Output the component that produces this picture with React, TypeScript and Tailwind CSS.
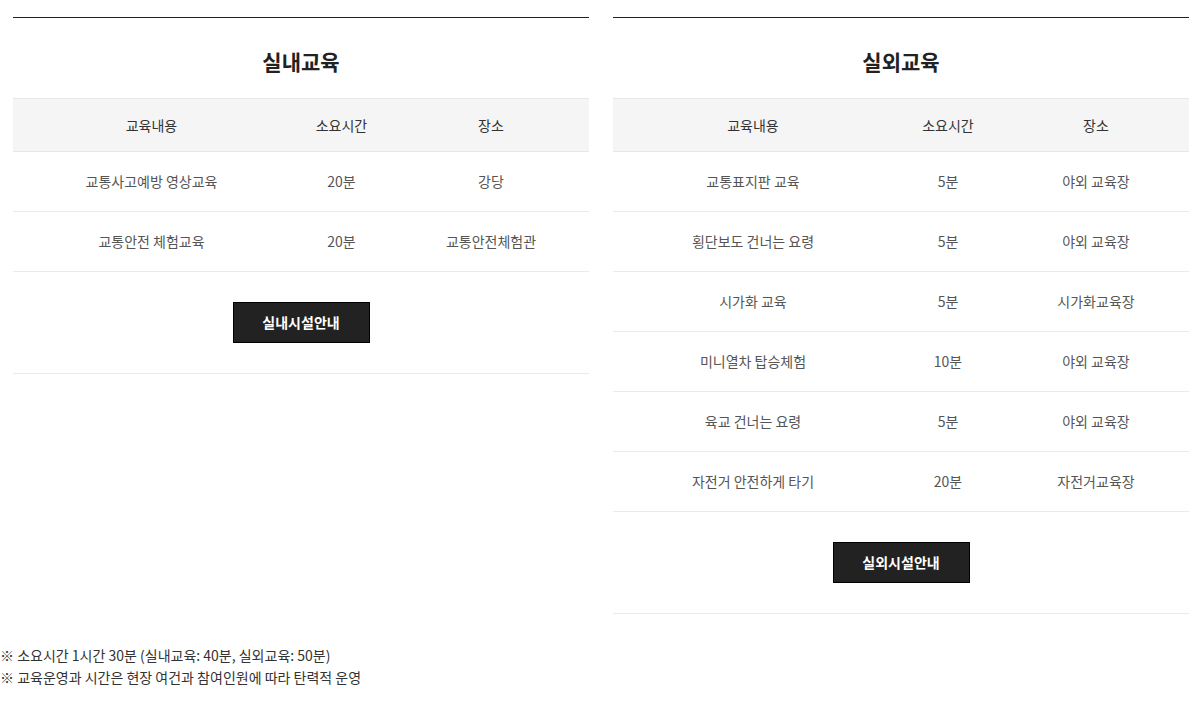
import React from 'react';

type Row = { name: string; time: string; place: string };

const indoor: Row[] = [
  { name: '교통사고예방 영상교육', time: '20분', place: '강당' },
  { name: '교통안전 체험교육', time: '20분', place: '교통안전체험관' },
];

const outdoor: Row[] = [
  { name: '교통표지판 교육', time: '5분', place: '야외 교육장' },
  { name: '횡단보도 건너는 요령', time: '5분', place: '야외 교육장' },
  { name: '시가화 교육', time: '5분', place: '시가화교육장' },
  { name: '미니열차 탑승체험', time: '10분', place: '야외 교육장' },
  { name: '육교 건너는 요령', time: '5분', place: '야외 교육장' },
  { name: '자전거 안전하게 타기', time: '20분', place: '자전거교육장' },
];

// column widths differ a little between the two tables (auto layout in the original)
const EduTable: React.FC<{ title: string; rows: Row[]; button: string; cols: [string, string, string] }> = ({
  title,
  rows,
  button,
  cols,
}) => (
  <section className="w-[576px] border-t border-[#222]">
    <h3 className="pt-[28px] pb-[22px] text-center text-[21px] leading-[30px] font-bold text-[#222]">{title}</h3>
    <table className="w-full table-fixed border-collapse text-[14px]">
      <colgroup>
        <col className={cols[0]} />
        <col className={cols[1]} />
        <col className={cols[2]} />
      </colgroup>
      <thead>
        <tr className="h-[53px] bg-[#f5f5f5] border-t border-[#e8e8e8] border-b border-[#e8e8e8] text-[#333]">
          <th className="font-normal">교육내용</th>
          <th className="font-normal">소요시간</th>
          <th className="font-normal">장소</th>
        </tr>
      </thead>
      <tbody>
        {rows.map((r) => (
          <tr key={r.name} className="h-[60px] border-b border-[#ebebeb] text-[#555] text-center">
            <td>{r.name}</td>
            <td>{r.time}</td>
            <td>{r.place}</td>
          </tr>
        ))}
      </tbody>
    </table>
    <div className="flex justify-center py-[30px] border-b border-[#ebebeb]">
      <button className="w-[137px] h-[41px] bg-[#222] border border-black text-white text-[14px] font-bold">
        {button}
      </button>
    </div>
  </section>
);

const App: React.FC = () => (
  <div className="min-h-screen bg-white font-['Noto_Sans_CJK_KR',sans-serif] pt-[17px]">
    <div className="flex items-start gap-[24px] pl-[13px]">
      <EduTable title="실내교육" rows={indoor} button="실내시설안내" cols={['w-[277px]', 'w-[103px]', 'w-[196px]']} />
      <EduTable title="실외교육" rows={outdoor} button="실외시설안내" cols={['w-[280px]', 'w-[110px]', 'w-[186px]']} />
    </div>
    <ul className="mt-[30px] text-[14px] leading-[22px] text-[#333]">
      <li>※ 소요시간 1시간 30분 (실내교육: 40분, 실외교육: 50분)</li>
      <li>※ 교육운영과 시간은 현장 여건과 참여인원에 따라 탄력적 운영</li>
    </ul>
  </div>
);

export default App;
